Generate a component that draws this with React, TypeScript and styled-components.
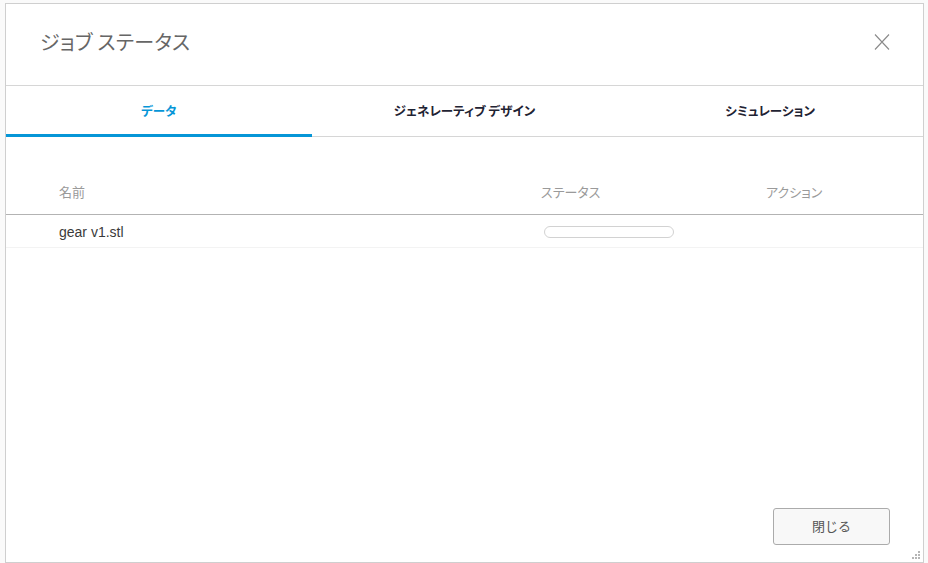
import React from "react";
import styled, { createGlobalStyle } from "styled-components";

const Global = createGlobalStyle`
  html, body { margin: 0; padding: 0; background: #ffffff; }
  body { font-family: "Noto Sans CJK JP", "Noto Sans", sans-serif; }
  * { box-sizing: border-box; }
`;

const Page = styled.div`
  width: 928px;
  height: 563px;
  padding: 3px 5px 0 5px;
  background: #fafafa;
  overflow: hidden;
`;

const Dialog = styled.div`
  position: relative;
  width: 919px;
  height: 560px;
  background: #fff;
  border: 1px solid #cfcfcf;
  display: flex;
  flex-direction: column;
`;

const Header = styled.div`
  height: 82px;
  flex: none;
  border-bottom: 1px solid #d6d6d6;
  display: flex;
  align-items: center;
  justify-content: space-between;
  padding: 0 33px 0 34px;
`;

const Title = styled.h1`
  margin: 0;
  font-size: 20px;
  font-weight: 400;
  color: #666;
  font-feature-settings: "palt";
  letter-spacing: 0.3px;
  margin-top: -7px;
`;

const CloseBtn = styled.button`
  border: 0;
  background: none;
  padding: 0;
  width: 16px;
  height: 18px;
  display: flex;
  cursor: pointer;
  margin-top: -5px;
`;

const Tabs = styled.div`
  height: 51px;
  flex: none;
  display: grid;
  grid-template-columns: repeat(3, 1fr);
  border-bottom: 1px solid #d6d6d6;
`;

const Tab = styled.div<{ $active?: boolean }>`
  display: flex;
  align-items: center;
  justify-content: center;
  font-size: 12.5px;
  font-weight: 700;
  color: ${(p) => (p.$active ? "#0696d7" : "#1f2333")};
  font-feature-settings: "palt";
  border-bottom: 3px solid ${(p) => (p.$active ? "#0696d7" : "transparent")};
  margin-bottom: -1px;
  padding-top: 1px;
`;

const Body = styled.div`
  flex: 1;
  padding-top: 37px;
`;

const Row = styled.div<{ $head?: boolean }>`
  display: grid;
  grid-template-columns: 482px 225px 1fr;
  align-items: center;
  padding-left: 53px;
  height: ${(p) => (p.$head ? "41px" : "33px")};
  border-bottom: 1px solid ${(p) => (p.$head ? "#b3b3b3" : "#f3f3f3")};
  ${(p) => (p.$head ? "padding-bottom: 5px;" : "padding-top: 1px;")}
`;

const HeadCell = styled.div`
  font-size: 13px;
  color: #9a9a9a;
  font-feature-settings: "palt";
`;

const NameCell = styled.div`
  font-family: "Liberation Sans", Arial, sans-serif;
  font-size: 14px;
  color: #3a3a3a;
`;

const Progress = styled.div`
  margin-left: 3px;
  width: 130px;
  height: 12px;
  border: 1px solid #d2d2d2;
  border-radius: 6px;
  background: #fff;
`;

const Footer = styled.div`
  display: flex;
  justify-content: flex-end;
  padding: 0 33px 17px 0;
`;

const Button = styled.button`
  width: 117px;
  height: 37px;
  border: 1px solid #ababab;
  border-radius: 3px;
  background: #f8f8f8;
  font-family: "Noto Sans CJK JP", sans-serif;
  font-size: 13px;
  color: #555;
  cursor: pointer;
  padding: 0 0 3px 0;
`;

const Grip = styled.svg`
  position: absolute;
  right: 3px;
  bottom: 3px;
`;

export default function App() {
  return (
    <>
      <Global />
      <Page>
        <Dialog>
          <Header>
            <Title>ジョブ ステータス</Title>
            <CloseBtn aria-label="close">
              <svg width="16" height="18" viewBox="0 0 16 18">
                <path d="M1 1.5 L15 16.5 M15 1.5 L1 16.5" stroke="#8a8a8a" strokeWidth="1.1" fill="none" />
              </svg>
            </CloseBtn>
          </Header>
          <Tabs>
            <Tab $active>データ</Tab>
            <Tab>ジェネレーティブ デザイン</Tab>
            <Tab>シミュレーション</Tab>
          </Tabs>
          <Body>
            <Row $head>
              <HeadCell>名前</HeadCell>
              <HeadCell>ステータス</HeadCell>
              <HeadCell>アクション</HeadCell>
            </Row>
            <Row>
              <NameCell>gear v1.stl</NameCell>
              <div>
                <Progress />
              </div>
              <div />
            </Row>
          </Body>
          <Footer>
            <Button>閉じる</Button>
          </Footer>
          <Grip width="8" height="8" viewBox="0 0 8 8">
            <rect x="6" y="0" width="2" height="2" fill="#b5b5b5" />
            <rect x="3" y="3" width="2" height="2" fill="#b5b5b5" />
            <rect x="6" y="3" width="2" height="2" fill="#b5b5b5" />
            <rect x="0" y="6" width="2" height="2" fill="#b5b5b5" />
            <rect x="3" y="6" width="2" height="2" fill="#b5b5b5" />
            <rect x="6" y="6" width="2" height="2" fill="#b5b5b5" />
          </Grip>
        </Dialog>
      </Page>
    </>
  );
}
